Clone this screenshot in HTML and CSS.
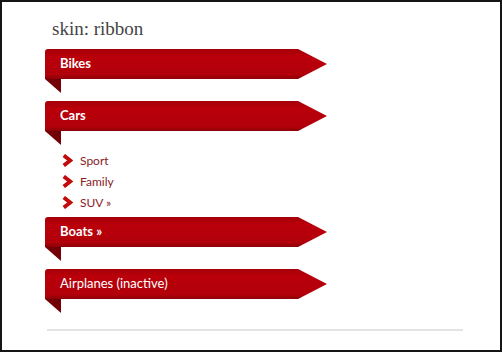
FILE: index.html
```html
<!DOCTYPE html>
<html lang="en">
<head>
  <meta charset="UTF-8">
  <title>skin: ribbon</title>
  <link rel="stylesheet" href="styles.css">
</head>
<body>
  <div class="frame">
    <h2 class="skin-title">skin: ribbon</h2>
    <ul class="ribbon-menu">
      <li class="ribbon-item">
        <a href="#" class="ribbon">Bikes</a>
        <div class="fold"></div>
      </li>
      <li class="ribbon-item has-sub">
        <a href="#" class="ribbon">Cars</a>
        <div class="fold"></div>
        <ul class="sub-menu">
          <li><span class="chev"><svg width="11" height="13" viewBox="0 0 11 13"><polyline points="1.8,1.4 8.2,6.5 1.8,11.6" fill="none" stroke="#c00a0c" stroke-width="3.8"/></svg></span><a href="#">Sport</a></li>
          <li><span class="chev"><svg width="11" height="13" viewBox="0 0 11 13"><polyline points="1.8,1.4 8.2,6.5 1.8,11.6" fill="none" stroke="#c00a0c" stroke-width="3.8"/></svg></span><a href="#">Family</a></li>
          <li><span class="chev"><svg width="11" height="13" viewBox="0 0 11 13"><polyline points="1.8,1.4 8.2,6.5 1.8,11.6" fill="none" stroke="#c00a0c" stroke-width="3.8"/></svg></span><a href="#">SUV &raquo;</a></li>
        </ul>
      </li>
      <li class="ribbon-item">
        <a href="#" class="ribbon">Boats &raquo;</a>
        <div class="fold"></div>
      </li>
      <li class="ribbon-item">
        <a href="#" class="ribbon inactive">Airplanes (inactive)</a>
        <div class="fold"></div>
      </li>
    </ul>
    <hr class="rule">
  </div>
</body>
</html>
```

FILE: styles.css
```css
body {
  margin: 0;
  background: #fff;
}

.frame {
  width: 502px;
  height: 352px;
  box-sizing: border-box;
  border: 2px solid #151515;
  padding: 15px 0 0 43px;
  overflow: hidden;
}

.skin-title {
  margin: 0 0 9px 7px;
  font-family: "Liberation Serif", serif;
  font-weight: normal;
  font-size: 19px;
  line-height: 23px;
  color: #444;
}

.ribbon-menu {
  list-style: none;
  margin: 0;
  padding: 0;
}

.ribbon-item {
  margin-bottom: 8px;
}

.ribbon-item.has-sub {
  margin-bottom: 4px;
}

.ribbon {
  display: block;
  width: 282px;
  height: 30px;
  box-sizing: border-box;
  padding-left: 15px;
  line-height: 29px;
  font-family: Lato, "Open Sans", sans-serif;
  font-size: 13px;
  font-weight: bold;
  color: #fff;
  text-decoration: none;
  border-top-left-radius: 3px;
  background-color: #b8000a;
  background-image:
    repeating-linear-gradient(90deg, rgba(0, 0, 0, 0.05) 0 1px, transparent 1px 2px),
    linear-gradient(#a80008, #bf000b 25%, #b6000a 85%, #8e0007);
  clip-path: polygon(0 0, 253px 0, 282px 50%, 253px 100%, 0 100%);
}

.ribbon.inactive {
  font-weight: normal;
}

.fold {
  width: 16px;
  height: 14px;
  background: #720006;
  clip-path: polygon(0 0, 100% 0, 100% 100%);
}

.sub-menu {
  list-style: none;
  margin: 5px 0 0 0;
  padding: 0 0 0 17px;
}

.sub-menu li {
  display: flex;
  align-items: center;
  height: 21px;
}

.chev {
  display: flex;
  width: 11px;
  margin-right: 7px;
}

.sub-menu a {
  font-family: Lato, "Open Sans", sans-serif;
  font-size: 12px;
  color: #8a1a1e;
  text-decoration: none;
}

.rule {
  width: 416px;
  margin: 16px 0 0 2px;
  border: none;
  height: 2px;
  background: #e4e4e4;
}
```
